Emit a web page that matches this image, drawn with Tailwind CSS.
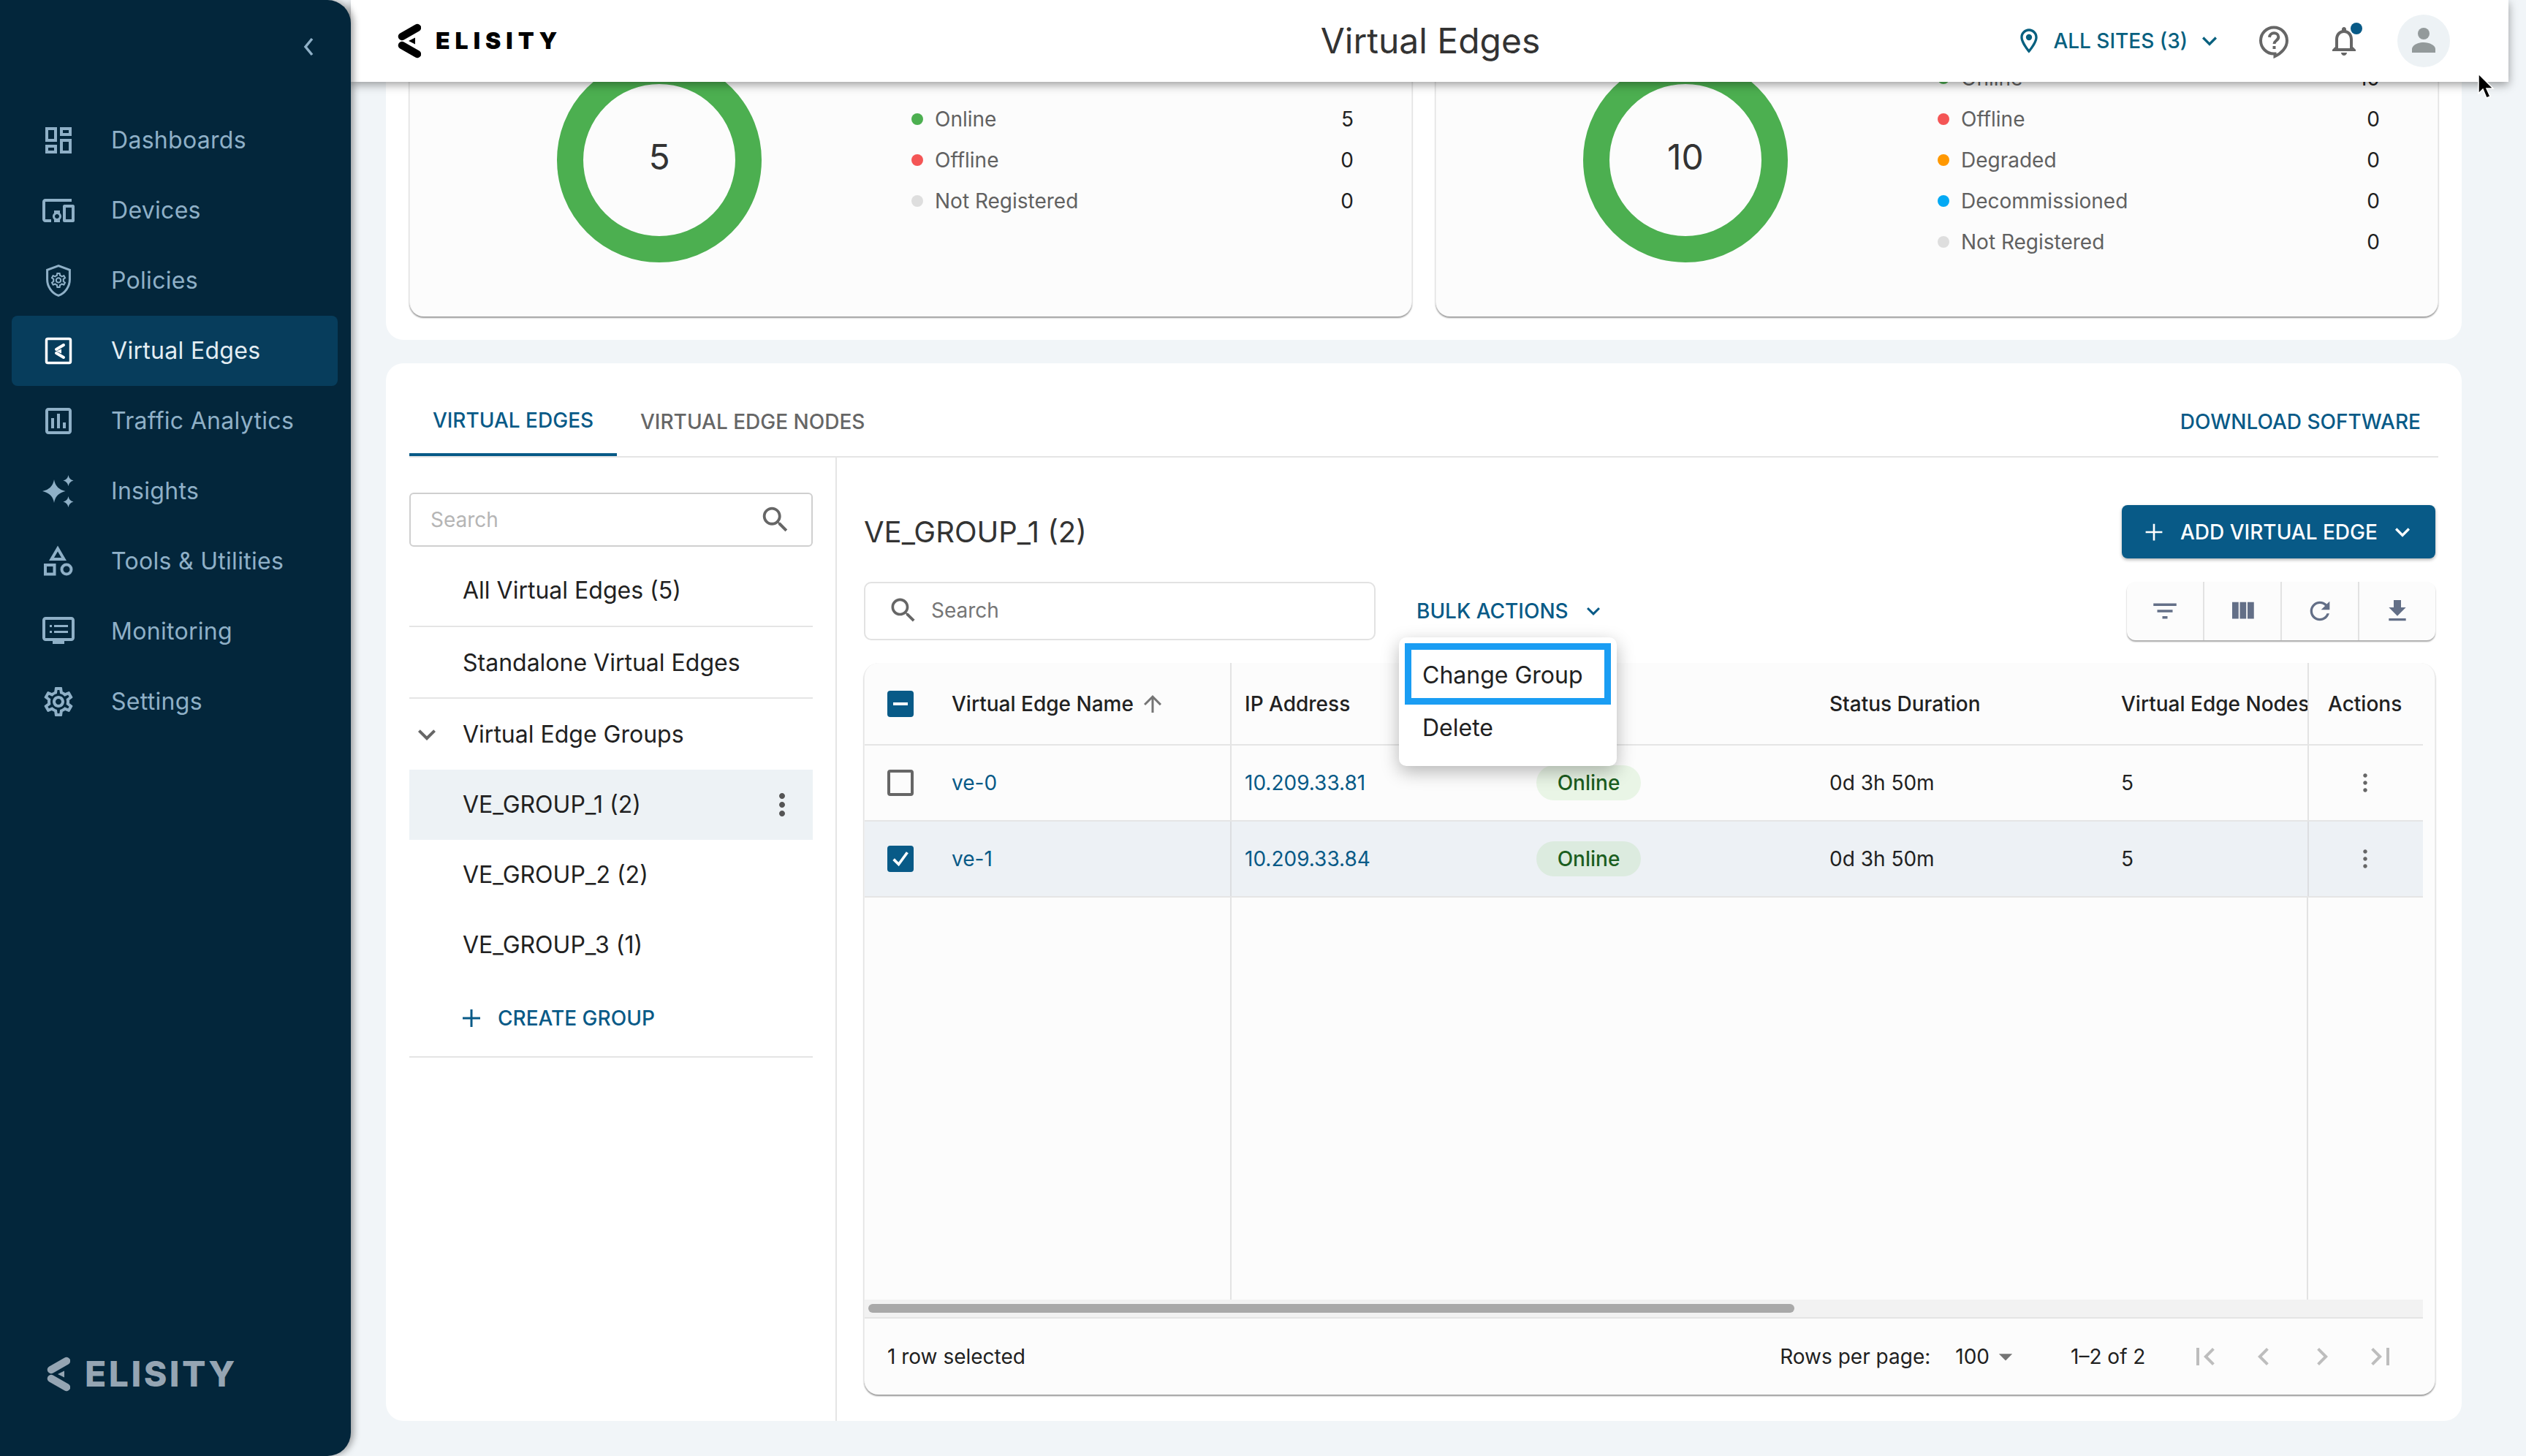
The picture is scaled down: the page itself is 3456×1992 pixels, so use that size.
<!DOCTYPE html>
<html lang="en">
<head>
<meta charset="utf-8">
<title>Virtual Edges</title>
<script src="https://cdn.jsdelivr.net/npm/@tailwindcss/browser@4"></script>
</head>
<body class="[font-family:Inter,sans-serif]">
<div class="relative flex h-[1992px] w-[3456px] overflow-hidden bg-[#f1f5f8] text-[#212121]">

  <!-- Sidebar -->
  <aside class="relative z-20 flex h-full w-[480px] shrink-0 flex-col rounded-r-[32px] bg-[#03263b] shadow-[4px_0_10px_rgba(0,0,0,0.35)]">
    <div class="flex h-[144px] justify-end pt-[40px] pr-[33px]">
      <svg class="h-[48px] w-[48px] text-[#8fb0c7]" viewBox="0 0 48 48" fill="none" stroke="currentColor" stroke-width="3.500" ><path d="M28 13 19 24l9 11"/></svg>
    </div>
    <nav class="flex flex-col pr-[18px] pl-[16px] text-[32px] tracking-[0.3px] text-[#8fb0c7]">
      <a class="flex h-[96px] items-center gap-[48px] pl-[40px]"><svg class="h-[48px] w-[48px] shrink-0" viewBox="0 0 24 24" fill="currentColor"><path d="M19 5v2h-4V5h4M9 5v6H5V5h4m10 8v6h-4v-6h4M9 17v2H5v-2h4M21 3h-8v6h8V3zM11 3H3v10h8V3zm10 8h-8v10h8V11zm-10 4H3v6h8v-6z"/></svg>Dashboards</a>
      <a class="flex h-[96px] items-center gap-[48px] pl-[40px]"><svg class="h-[48px] w-[48px] shrink-0" viewBox="0 0 24 24" fill="currentColor"><path d="M3 6h18V4H3c-1.1 0-2 .9-2 2v12c0 1.1.9 2 2 2h4v-2H3V6zm10 6H9v1.78c-.61.55-1 1.33-1 2.22s.39 1.67 1 2.22V20h4v-1.78c.61-.55 1-1.34 1-2.22s-.39-1.67-1-2.22V12zm-2 5.5c-.83 0-1.5-.67-1.5-1.5s.67-1.5 1.5-1.5 1.5.67 1.5 1.5-.67 1.5-1.5 1.5zM22 8h-6c-.5 0-1 .5-1 1v10c0 .5.5 1 1 1h6c.5 0 1-.5 1-1V9c0-.5-.5-1-1-1zm-1 10h-4v-8h4v8z"/></svg>Devices</a>
      <a class="flex h-[96px] items-center gap-[48px] pl-[40px]"><svg class="h-[48px] w-[48px] shrink-0" viewBox="0 0 24 24" fill="currentColor"><path fill="none" stroke="currentColor" stroke-width="1.5" d="M12 1.800 4.300 4.700v6.500c0 4.800 3.200 9.400 7.700 11 4.500-1.600 7.700-6.200 7.700-11V4.700z"/><g transform="translate(5.700 5.400) scale(.525)"><path d="M19.43 12.98c.04-.32.07-.64.07-.98 0-.34-.03-.66-.07-.98l2.11-1.65c.19-.15.24-.42.12-.64l-2-3.46c-.09-.16-.26-.25-.44-.25-.06 0-.12.01-.17.03l-2.49 1c-.52-.4-1.08-.73-1.69-.98l-.38-2.65C14.46 2.18 14.25 2 14 2h-4c-.25 0-.46.18-.49.42l-.38 2.65c-.61.25-1.17.59-1.69.98l-2.49-1c-.06-.02-.12-.03-.18-.03-.17 0-.34.09-.43.25l-2 3.46c-.13.22-.07.49.12.64l2.11 1.65c-.04.32-.07.65-.07.98 0 .33.03.66.07.98l-2.11 1.65c-.19.15-.24.42-.12.64l2 3.46c.09.16.26.25.44.25.06 0 .12-.01.17-.03l2.49-1c.52.4 1.08.73 1.69.98l.38 2.65c.03.24.24.42.49.42h4c.25 0 .46-.18.49-.42l.38-2.65c.61-.25 1.17-.59 1.69-.98l2.49 1c.06.02.12.03.18.03.17 0 .34-.09.43-.25l2-3.46c.12-.22.07-.49-.12-.64l-2.11-1.65zm-1.98-1.71c.04.31.05.52.05.73 0 .21-.02.43-.05.73l-.14 1.13.89.7 1.08.84-.7 1.21-1.27-.51-1.04-.42-.9.68c-.43.32-.84.56-1.25.73l-1.06.43-.16 1.13-.2 1.35h-1.4l-.19-1.35-.16-1.13-1.06-.43c-.43-.18-.83-.41-1.23-.71l-.91-.7-1.06.43-1.27.51-.7-1.21 1.08-.84.89-.7-.14-1.13c-.03-.31-.05-.54-.05-.74s.02-.43.05-.73l.14-1.13-.89-.7-1.08-.84.7-1.21 1.27.51 1.04.42.9-.68c.43-.32.84-.56 1.25-.73l1.06-.43.16-1.13.2-1.35h1.39l.19 1.35.16 1.13 1.06.43c.43.18.83.41 1.23.71l.91.7 1.06-.43 1.27-.51.7 1.21-1.07.85-.89.7.14 1.13zM12 8c-2.21 0-4 1.79-4 4s1.79 4 4 4 4-1.79 4-4-1.79-4-4-4zm0 6c-1.1 0-2-.9-2-2s.9-2 2-2 2 .9 2 2-.9 2-2 2z"/></g></svg>Policies</a>
      <a class="flex h-[96px] items-center gap-[48px] rounded-[8px] bg-[#073d5c] pl-[40px] text-[#e3edf3]"><svg class="h-[48px] w-[48px] shrink-0" viewBox="0 0 48 48" fill="none"><rect x="7.500" y="7.500" width="33" height="33" rx="2" stroke="#fff" stroke-width="3.500"/><path d="M31 16l-10 6M21 27l10 6" stroke="#fff" stroke-width="4" stroke-linecap="round"/><path d="M21 24.500l7-3v6z" fill="#fff"/></svg>Virtual Edges</a>
      <a class="flex h-[96px] items-center gap-[48px] pl-[40px]"><svg class="h-[48px] w-[48px] shrink-0" viewBox="0 0 24 24" fill="currentColor"><path d="M9 17H7v-7h2v7zm4 0h-2V7h2v10zm4 0h-2v-4h2v4zm2 2H5V5h14v14zm0-16H5c-1.1 0-2 .9-2 2v14c0 1.1.9 2 2 2h14c1.1 0 2-.9 2-2V5c0-1.1-.9-2-2-2z"/></svg>Traffic Analytics</a>
      <a class="flex h-[96px] items-center gap-[48px] pl-[40px]"><svg class="h-[48px] w-[48px] shrink-0" viewBox="0 0 48 48" fill="currentColor"><path d="M18 8q2 13 15.500 16Q20 27 18 40 16 27 2 24 16 21 18 8z"/><path d="M37.500 2q1 6 7 7.500-6 1.500-7 7.500-1-6-7-7.500 6-1.500 7-7.500zM37.500 31q1 6 7 7.500-6 1.500-7 7.500-1-6-7-7.500 6-1.500 7-7.500z"/></svg>Insights</a>
      <a class="flex h-[96px] items-center gap-[48px] pl-[40px]"><svg class="h-[48px] w-[48px] shrink-0" viewBox="0 0 48 48" fill="none" stroke="currentColor" stroke-width="4"><path d="M23 6.500 14.500 21h17z"/><rect x="6" y="29" width="12.500" height="12.500"/><circle cx="35" cy="35" r="6.500"/></svg>Tools &amp; Utilities</a>
      <a class="flex h-[96px] items-center gap-[48px] pl-[40px]"><svg class="h-[48px] w-[48px] shrink-0" viewBox="0 0 48 48" fill="none"><rect x="4" y="6" width="40" height="29" rx="2.500" stroke="currentColor" stroke-width="4"/><path d="M12 15h3v3h-3zM12 23h3v3h-3zM18 15h19v3H18zM18 23h19v3H18zM16 36h16v5H16z" fill="currentColor"/></svg>Monitoring</a>
      <a class="flex h-[96px] items-center gap-[48px] pl-[40px]"><svg class="h-[48px] w-[48px] shrink-0" viewBox="0 0 24 24" fill="currentColor"><path d="M19.43 12.98c.04-.32.07-.64.07-.98 0-.34-.03-.66-.07-.98l2.11-1.65c.19-.15.24-.42.12-.64l-2-3.46c-.09-.16-.26-.25-.44-.25-.06 0-.12.01-.17.03l-2.49 1c-.52-.4-1.08-.73-1.69-.98l-.38-2.65C14.46 2.18 14.25 2 14 2h-4c-.25 0-.46.18-.49.42l-.38 2.65c-.61.25-1.17.59-1.69.98l-2.49-1c-.06-.02-.12-.03-.18-.03-.17 0-.34.09-.43.25l-2 3.46c-.13.22-.07.49.12.64l2.11 1.65c-.04.32-.07.65-.07.98 0 .33.03.66.07.98l-2.11 1.65c-.19.15-.24.42-.12.64l2 3.46c.09.16.26.25.44.25.06 0 .12-.01.17-.03l2.49-1c.52.4 1.08.73 1.69.98l.38 2.65c.03.24.24.42.49.42h4c.25 0 .46-.18.49-.42l.38-2.65c.61-.25 1.17-.59 1.69-.98l2.49 1c.06.02.12.03.18.03.17 0 .34-.09.43-.25l2-3.46c.12-.22.07-.49-.12-.64l-2.11-1.65zm-1.98-1.71c.04.31.05.52.05.73 0 .21-.02.43-.05.73l-.14 1.13.89.7 1.08.84-.7 1.21-1.27-.51-1.04-.42-.9.68c-.43.32-.84.56-1.25.73l-1.06.43-.16 1.13-.2 1.35h-1.4l-.19-1.35-.16-1.13-1.06-.43c-.43-.18-.83-.41-1.23-.71l-.91-.7-1.06.43-1.27.51-.7-1.21 1.08-.84.89-.7-.14-1.13c-.03-.31-.05-.54-.05-.74s.02-.43.05-.73l.14-1.13-.89-.7-1.08-.84.7-1.21 1.27.51 1.04.42.9-.68c.43-.32.84-.56 1.25-.73l1.06-.43.16-1.13.2-1.35h1.39l.19 1.35.16 1.13 1.06.43c.43.18.83.41 1.23.71l.91.7 1.06-.43 1.27-.51.7 1.21-1.07.85-.89.7.14 1.13zM12 8c-2.21 0-4 1.79-4 4s1.79 4 4 4 4-1.79 4-4-1.79-4-4-4zm0 6c-1.1 0-2-.9-2-2s.9-2 2-2 2 .9 2 2-.9 2-2 2z"/></svg>Settings</a>
    </nav>
    <div class="mt-auto flex items-center gap-[20px] pb-[88px] pl-[64px] text-[#95a5b3]">
      <svg class="h-[48px] w-[32px] shrink-0" viewBox="0 0 32 48" fill="currentColor"><path d="M27 6 6 18M6 30l21 12" stroke="currentColor" stroke-width="10.500" stroke-linecap="round" stroke-linejoin="round" fill="none"/><path d="M15 24l9-4.500v9z"/></svg>
      <span class="text-[48px] leading-none font-extrabold tracking-[3.500px]">ELISITY</span>
    </div>
  </aside>

  <!-- Main -->
  <main class="relative h-full flex-1">
    <header class="absolute top-0 left-0 z-10 flex h-[112px] w-[2952px] items-center bg-white shadow-[0_4px_12px_rgba(0,0,0,0.38)]">
      <div class="flex flex-1 items-center gap-[20px] pl-[64px] text-black">
        <svg class="h-[48px] w-[32px] shrink-0" viewBox="0 0 32 48" fill="currentColor"><path d="M27 6 6 18M6 30l21 12" stroke="currentColor" stroke-width="10.500" stroke-linecap="round" stroke-linejoin="round" fill="none"/><path d="M15 24l9-4.500v9z"/></svg>
        <span class="text-[32px] leading-none font-black tracking-[7px]">ELISITY</span>
      </div>
      <h1 class="ml-[18px] text-[48px] leading-none font-normal text-[#333]">Virtual Edges</h1>
      <div class="flex flex-1 items-center justify-end pr-[80px]">
        <svg class="mr-[13px] h-[40px] w-[40px] text-[#07607f]" viewBox="0 0 24 24" fill="currentColor"><path d="M12 2C8.130 2 5 5.130 5 9c0 5.250 7 13 7 13s7-7.750 7-13c0-3.870-3.130-7-7-7zM7 9c0-2.760 2.240-5 5-5s5 2.240 5 5c0 2.880-2.880 7.190-5 9.880C9.920 16.210 7 11.850 7 9z"/><circle cx="12" cy="9" r="2.500"/></svg>
        <span class="text-[28px] font-medium text-[#07607f]">ALL SITES (3)</span>
        <svg class="ml-[10px] h-[40px] w-[40px] text-[#07607f]" viewBox="0 0 24 24" fill="currentColor"><path d="M16.590 8.590 12 13.170 7.410 8.590 6 10l6 6 6-6z"/></svg>
        <svg class="ml-[44px] h-[48px] w-[48px] text-[#666]" viewBox="0 0 48 48" fill="none"><path d="M24 5.500a18 18 0 1 0 0 36h1.500v3.500C34 41 42 33.500 42 23.500 42 13.500 34 5.500 24 5.500z" stroke="currentColor" stroke-width="4"/><path d="M18 19c.500-7.500 12-7.500 12.300-.5.200 4.800-5.800 5.200-5.800 9.500" stroke="currentColor" stroke-width="4"/><rect x="22.500" y="31" width="4" height="4" fill="currentColor"/></svg>
        <div class="relative ml-[48px] h-[48px] w-[48px]">
          <svg class="h-[48px] w-[48px] text-[#666]" viewBox="0 0 24 24" fill="currentColor"><path d="M12 22c1.100 0 2-.9 2-2h-4c0 1.100.9 2 2 2zm6-6v-5c0-3.070-1.630-5.640-4.500-6.320V4c0-.830-.670-1.500-1.500-1.500s-1.500.670-1.500 1.500v.680C7.640 5.360 6 7.920 6 11v5l-2 2v1h16v-1l-2-2zm-2 1H8v-6c0-2.480 1.510-4.500 4-4.500s4 2.020 4 4.500v6z"/></svg>
          <span class="absolute top-[-1px] right-[-1px] h-[16px] w-[16px] rounded-full bg-[#085a87]"></span>
        </div>
        <div class="ml-[49px] flex h-[72px] w-[72px] items-center justify-center rounded-full bg-[#edf2f5]">
          <svg class="h-[48px] w-[48px] text-[#939a9b]" viewBox="0 0 48 48" fill="currentColor"><circle cx="24" cy="14" r="8"/><path d="M8 40v-5c0-5 8-9 16-9s16 4 16 9v5z"/></svg>
        </div>
      </div>
    </header>

    <div class="flex w-[2976px] flex-col pr-[88px] pl-[48px]">
      <!-- Summary panel -->
      <section class="flex h-[465px] gap-[32px] rounded-b-[24px] bg-white px-[32px] pb-[32px]">
        <div class="flex flex-1 rounded-b-[20px] border-x border-[#eeeeee] bg-[#fcfcfc] shadow-[0_2px_2px_rgba(0,0,0,0.4)]">
          <div class="mt-[79px] ml-[201px] flex h-[280px] w-[280px] shrink-0 items-center justify-center rounded-full border-[36px] border-[#4caf50] pb-[8px] text-[48px] leading-none text-[#333]">5</div>
          <div class="mt-[135px] ml-[205px] flex w-[605px] flex-col text-[28px] text-[#616161]">
            <div class="flex h-[56px] items-center"><span class="mr-[16px] h-[16px] w-[16px] rounded-full bg-[#4caf50]"></span>Online<span class="ml-auto text-[#212121]">5</span></div>
            <div class="flex h-[56px] items-center"><span class="mr-[16px] h-[16px] w-[16px] rounded-full bg-[#f45555]"></span>Offline<span class="ml-auto text-[#212121]">0</span></div>
            <div class="flex h-[56px] items-center"><span class="mr-[16px] h-[16px] w-[16px] rounded-full bg-[#dedede]"></span>Not Registered<span class="ml-auto text-[#212121]">0</span></div>
          </div>
        </div>
        <div class="flex flex-1 rounded-b-[20px] border-x border-[#eeeeee] bg-[#fcfcfc] shadow-[0_2px_2px_rgba(0,0,0,0.4)]">
          <div class="mt-[79px] ml-[201px] flex h-[280px] w-[280px] shrink-0 items-center justify-center rounded-full border-[36px] border-[#4caf50] pb-[8px] text-[48px] leading-none text-[#333]">10</div>
          <div class="mt-[79px] ml-[205px] flex w-[605px] flex-col text-[28px] text-[#616161]">
            <div class="flex h-[56px] items-center"><span class="mr-[16px] h-[16px] w-[16px] rounded-full bg-[#4caf50]"></span>Online<span class="ml-auto text-[#212121]">10</span></div>
            <div class="flex h-[56px] items-center"><span class="mr-[16px] h-[16px] w-[16px] rounded-full bg-[#f45555]"></span>Offline<span class="ml-auto text-[#212121]">0</span></div>
            <div class="flex h-[56px] items-center"><span class="mr-[16px] h-[16px] w-[16px] rounded-full bg-[#ff9800]"></span>Degraded<span class="ml-auto text-[#212121]">0</span></div>
            <div class="flex h-[56px] items-center"><span class="mr-[16px] h-[16px] w-[16px] rounded-full bg-[#03a9f4]"></span>Decommissioned<span class="ml-auto text-[#212121]">0</span></div>
            <div class="flex h-[56px] items-center"><span class="mr-[16px] h-[16px] w-[16px] rounded-full bg-[#dedede]"></span>Not Registered<span class="ml-auto text-[#212121]">0</span></div>
          </div>
        </div>
      </section>

      <!-- Detail panel -->
      <section class="mt-[32px] flex h-[1447px] flex-col rounded-[24px] bg-white px-[32px]">
        <div class="flex h-[129px] shrink-0 items-end border-b-2 border-[#e5e5e5] pr-[24px] text-[28px] font-medium">
          <div class="flex h-[98px] w-[284px] items-center justify-center border-b-4 border-[#085a87] pt-[4px] text-[#085a87]">VIRTUAL EDGES</div>
          <div class="flex h-[98px] items-center px-[32px] pt-[4px] text-[#666]">VIRTUAL EDGE NODES</div>
          <div class="ml-auto flex h-[98px] items-center pt-[4px] text-[#085a87]">DOWNLOAD SOFTWARE</div>
        </div>

        <div class="flex flex-1">
          <!-- Groups column -->
          <div class="w-[585px] shrink-0 border-r-2 border-[#e5e5e5] pt-[48px]">
            <div class="w-[552px] text-[32px]">
              <div class="flex h-[74px] items-center justify-between rounded-[6px] border-2 border-[#cfcfcf] pr-[26px] pl-[27px] text-[28px] text-[#b5b5b5]">Search
                <svg class="h-[46px] w-[46px] text-[#666]" viewBox="0 0 24 24" fill="currentColor"><path d="M15.500 14h-.790l-.280-.270C15.410 12.590 16 11.110 16 9.500 16 5.910 13.090 3 9.500 3S3 5.910 3 9.500 5.910 16 9.500 16c1.610 0 3.090-.590 4.230-1.570l.270.280v.790l5 4.990L20.490 19l-4.990-5zm-6 0C7.010 14 5 11.990 5 9.500S7.010 5 9.500 5 14 7.010 14 9.500 11.990 14 9.500 14z"/></svg>
              </div>
              <div class="mt-[10px] flex h-[100px] items-center border-b-2 border-[#e5e5e5] pt-[2px] pl-[73px]">All Virtual Edges (5)</div>
              <div class="flex h-[98px] items-center border-b-2 border-[#e5e5e5] pt-[1px] pl-[73px]">Standalone Virtual Edges</div>
              <div class="flex h-[97px] items-center">
                <svg class="h-[48px] w-[48px] text-[#666]" viewBox="0 0 24 24" fill="currentColor"><path d="M16.590 8.590 12 13.170 7.410 8.590 6 10l6 6 6-6z"/></svg>
                <span class="ml-[25px]">Virtual Edge Groups</span>
              </div>
              <div class="flex h-[96px] items-center justify-between bg-[#edf2f5] pr-[18px] pl-[73px]">VE_GROUP_1 (2)
                <svg class="h-[48px] w-[48px] text-[#555]" viewBox="0 0 24 24" fill="currentColor"><path d="M12 8c1.100 0 2-.9 2-2s-.9-2-2-2-2 .9-2 2 .9 2 2 2zm0 2c-1.100 0-2 .9-2 2s.9 2 2 2 2-.9 2-2-.9-2-2-2zm0 6c-1.100 0-2 .9-2 2s.9 2 2 2 2-.9 2-2-.9-2-2-2z"/></svg>
              </div>
              <div class="flex h-[96px] items-center pl-[73px]">VE_GROUP_2 (2)</div>
              <div class="flex h-[96px] items-center pl-[73px]">VE_GROUP_3 (1)</div>
              <div class="flex h-[106px] items-center border-b-2 border-[#e5e5e5] pl-[69px] text-[28px] font-medium text-[#085a87]">
                <svg class="mr-[20px] h-[32px] w-[32px]" viewBox="0 0 32 32" fill="currentColor"><path d="M14.500 4h3v10.500H28v3H17.500V28h-3V17.500H4v-3h10.500z"/></svg>CREATE GROUP
              </div>
            </div>
          </div>

          <!-- Table column -->
          <div class="relative w-[2191px] pt-[65px] pr-[4px] pl-[37px]">
            <div class="flex h-[73px] items-center justify-between">
              <h2 class="text-[40px] leading-none font-normal text-[#333]">VE_GROUP_1 (2)</h2>
              <button class="flex h-[73px] w-[429px] items-center rounded-[8px] bg-[#085a87] pl-[30px] text-[28px] font-medium text-white shadow-[0_2px_4px_rgba(0,0,0,0.3)]">
                <svg class="mr-[22px] h-[28px] w-[28px]" viewBox="0 0 32 32" fill="currentColor"><path d="M14.500 3h3v11.500H29v3H17.500V29h-3V17.500H3v-3h11.500z"/></svg>ADD VIRTUAL EDGE
                <svg class="ml-[14px] h-[40px] w-[40px]" viewBox="0 0 24 24" fill="currentColor"><path d="M16.590 8.590 12 13.170 7.410 8.590 6 10l6 6 6-6z"/></svg>
              </button>
            </div>

            <div class="mt-[32px] flex h-[80px] items-center justify-between">
              <div class="flex items-center">
                <div class="flex h-[80px] w-[700px] items-center rounded-[10px] border-2 border-[#e2e2e2] pb-[2px] pl-[30px] text-[28px] text-[#767676]">
                  <svg class="mr-[16px] h-[44px] w-[44px] text-[#666]" viewBox="0 0 24 24" fill="currentColor"><path d="M15.500 14h-.790l-.280-.270C15.410 12.590 16 11.110 16 9.500 16 5.910 13.090 3 9.500 3S3 5.910 3 9.500 5.910 16 9.500 16c1.610 0 3.090-.590 4.230-1.570l.270.280v.790l5 4.990L20.490 19l-4.990-5zm-6 0C7.010 14 5 11.990 5 9.500S7.010 5 9.500 5 14 7.010 14 9.500 11.990 14 9.500 14z"/></svg>Search
                </div>
                <div class="ml-[56px] flex items-center text-[28px] font-medium text-[#085a87]">BULK ACTIONS
                  <svg class="ml-[16px] h-[36px] w-[36px]" viewBox="0 0 24 24" fill="currentColor"><path d="M16.590 8.590 12 13.170 7.410 8.590 6 10l6 6 6-6z"/></svg>
                </div>
              </div>
              <div class="flex h-[80px] w-[422px] rounded-[12px] bg-[#fcfcfc] text-[#636f87] shadow-[0_2px_2px_rgba(0,0,0,0.35)]">
                <div class="flex flex-1 items-center justify-center border-r-2 border-[#e2e2e2]"><svg class="h-[42px] w-[42px]" viewBox="0 0 24 24" fill="currentColor"><path d="M10 18h4v-2h-4v2zM3 6v2h18V6H3zm3 7h12v-2H6v2z"/></svg></div>
                <div class="flex flex-1 items-center justify-center border-r-2 border-[#e2e2e2]"><svg class="h-[42px] w-[42px]" viewBox="0 0 24 24" fill="currentColor"><path d="M10 18h5V5h-5v13zm-6 0h5V5H4v13zM16 5v13h5V5h-5z"/></svg></div>
                <div class="flex flex-1 items-center justify-center border-r-2 border-[#e2e2e2]"><svg class="h-[40px] w-[40px]" viewBox="0 0 24 24" fill="currentColor"><path d="M17.650 6.350C16.200 4.900 14.210 4 12 4c-4.420 0-7.990 3.580-7.990 8s3.570 8 7.990 8c3.730 0 6.840-2.550 7.730-6h-2.080c-.820 2.330-3.040 4-5.650 4-3.310 0-6-2.690-6-6s2.690-6 6-6c1.660 0 3.140.690 4.220 1.780L13 11h7V4l-2.350 2.350z"/></svg></div>
                <div class="flex flex-1 items-center justify-center"><svg class="h-[40px] w-[40px]" viewBox="0 0 24 24" fill="currentColor"><path d="M19 9h-4V3H9v6H5l7 7 7-7zM5 18v2h14v-2H5z"/></svg></div>
              </div>
            </div>

            <!-- Table -->
            <div class="mt-[31px] flex h-[1001px] flex-col rounded-[20px] border-x border-[#eeeeee] bg-[#fcfcfc] pr-[16px] text-[28px] shadow-[0_2px_2px_rgba(0,0,0,0.4)]">
              <div class="grid h-[113px] shrink-0 grid-cols-[502px_401px_399px_401px_271px_160px] items-stretch border-b-2 border-[#e5e5e5] font-medium">
                <div class="flex items-center border-r-2 border-[#e3e3e3] pl-[31px]">
                  <span class="mr-[52px] flex h-[36px] w-[36px] items-center justify-center rounded-[4px] bg-[#085a87]"><span class="h-[4px] w-[20px] bg-white"></span></span>Virtual Edge Name
                  <svg class="ml-[8px] h-[36px] w-[36px] text-[#757575]" viewBox="0 0 24 24" fill="currentColor"><path d="M4 12l1.410 1.410L11 7.830V20h2V7.830l5.580 5.590L20 12l-8-8-8 8z" /></svg>
                </div>
                <div class="flex items-center pl-[18px]">IP Address</div>
                <div></div>
                <div class="flex items-center pl-[18px]">Status Duration</div>
                <div class="flex items-center overflow-hidden pl-[16px] whitespace-nowrap">Virtual Edge Nodes</div>
                <div class="flex items-center border-l-2 border-[#e3e3e3] pl-[26px]">Actions</div>
              </div>
              <div class="grid h-[104px] shrink-0 grid-cols-[502px_401px_399px_401px_271px_160px] items-stretch border-b-2 border-[#e5e5e5]">
                <div class="flex items-center border-r-2 border-[#e3e3e3] pl-[31px] text-[#085a87]">
                  <span class="mr-[52px] h-[36px] w-[36px] rounded-[4px] border-[4px] border-[#666]"></span>ve-0
                </div>
                <div class="flex items-center pl-[18px] text-[#085a87]">10.209.33.81</div>
                <div class="flex items-center pl-[16px]"><span class="flex h-[48px] w-[143px] items-center justify-center rounded-full bg-[#e9f5e6] font-medium text-[#1b5e20]">Online</span></div>
                <div class="flex items-center pl-[18px]">0d 3h 50m</div>
                <div class="flex items-center pl-[16px]">5</div>
                <div class="flex items-center justify-center border-l-2 border-[#e3e3e3] pr-[4px] text-[#666]"><svg class="h-[44px] w-[44px]" viewBox="0 0 24 24" fill="currentColor"><path d="M12 8c.8 0 1.500-.7 1.500-1.500S12.800 5 12 5s-1.500.7-1.500 1.500S11.200 8 12 8zm0 2.500c-.8 0-1.500.7-1.500 1.500s.7 1.500 1.500 1.500 1.500-.7 1.500-1.500-.7-1.500-1.500-1.500zm0 5.500c-.8 0-1.500.7-1.500 1.500S11.200 19 12 19s1.500-.7 1.500-1.500S12.800 16 12 16z"/></svg></div>
              </div>
              <div class="grid h-[104px] shrink-0 grid-cols-[502px_401px_399px_401px_271px_160px] items-stretch border-b-2 border-[#e5e5e5] bg-[#edf1f5]">
                <div class="flex items-center border-r-2 border-[#dcdee1] pl-[31px] text-[#085a87]">
                  <span class="mr-[52px] flex h-[36px] w-[36px] items-center justify-center rounded-[4px] bg-[#085a87]"><svg class="h-[30px] w-[30px] text-white" viewBox="0 0 24 24" fill="none" stroke="currentColor" stroke-width="3"><path d="M4.500 12.500 10 18l9.500-13"/></svg></span>ve-1
                </div>
                <div class="flex items-center pl-[18px] text-[#085a87]">10.209.33.84</div>
                <div class="flex items-center pl-[16px]"><span class="flex h-[48px] w-[143px] items-center justify-center rounded-full bg-[#dcebdf] font-medium text-[#1b5e20]">Online</span></div>
                <div class="flex items-center pl-[18px]">0d 3h 50m</div>
                <div class="flex items-center pl-[16px]">5</div>
                <div class="flex items-center justify-center border-l-2 border-[#dcdee1] pr-[4px] text-[#666]"><svg class="h-[44px] w-[44px]" viewBox="0 0 24 24" fill="currentColor"><path d="M12 8c.8 0 1.500-.7 1.500-1.500S12.800 5 12 5s-1.500.7-1.500 1.500S11.200 8 12 8zm0 2.500c-.8 0-1.500.7-1.500 1.500s.7 1.500 1.500 1.500 1.500-.7 1.500-1.500-.7-1.500-1.500-1.500zm0 5.500c-.8 0-1.500.7-1.500 1.500S11.200 19 12 19s1.500-.7 1.500-1.500S12.800 16 12 16z"/></svg></div>
              </div>
              <div class="grid flex-1 grid-cols-[502px_1471px_160px]">
                <div class="border-r-2 border-[#e3e3e3]"></div>
                <div></div>
                <div class="border-l-2 border-[#e3e3e3]"></div>
              </div>
              <div class="h-[26px] shrink-0 border-b-2 border-[#e5e5e5] bg-[#f2f2f2] px-[5px] pt-[6px]">
                <div class="h-[12px] w-[1267px] rounded-full bg-[#a9a9a9]"></div>
              </div>
              <div class="flex h-[104px] shrink-0 items-center pr-[34px] pl-[31px]">
                <span>1 row selected</span>
                <span class="ml-auto">Rows per page:</span>
                <span class="ml-[34px]">100</span>
                <svg class="h-[44px] w-[44px] text-[#757575]" viewBox="0 0 24 24" fill="currentColor"><path d="M7 10l5 5 5-5z"/></svg>
                <span class="ml-[67px] w-[160px]">1–2 of 2</span>
                <svg class="h-[48px] w-[48px] text-[#bdbdbd]" viewBox="0 0 24 24" fill="currentColor"><path d="M18.410 16.590 13.820 12l4.590-4.590L17 6l-6 6 6 6zM6 6h2v12H6z"/></svg>
                <svg class="ml-[32px] h-[48px] w-[48px] text-[#bdbdbd]" viewBox="0 0 24 24" fill="currentColor"><path d="M15.410 7.410 14 6l-6 6 6 6 1.410-1.410L10.830 12z"/></svg>
                <svg class="ml-[32px] h-[48px] w-[48px] text-[#bdbdbd]" viewBox="0 0 24 24" fill="currentColor"><path d="M10 6 8.590 7.410 13.170 12l-4.580 4.590L10 18l6-6z"/></svg>
                <svg class="ml-[32px] h-[48px] w-[48px] text-[#bdbdbd]" viewBox="0 0 24 24" fill="currentColor"><path d="M5.590 7.410 10.180 12l-4.590 4.590L7 18l6-6-6-6zM16 6h2v12h-2z"/></svg>
              </div>
            </div>

            <!-- Bulk actions menu -->
            <div class="absolute top-[246px] left-[769px] z-[5] h-[176px] w-[298px] rounded-[10px] bg-white p-[8px] text-[32px] shadow-[0_8px_24px_rgba(0,0,0,0.28)]">
              <div class="flex h-[84px] items-center border-[9px] border-[#1a9df3] pt-[3px] pl-[15px]">Change Group</div>
              <div class="mt-[8px] flex h-[48px] items-center pl-[24px]">Delete</div>
            </div>
          </div>
        </div>
      </section>
    </div>
  </main>

  <!-- Pointer -->
  <svg class="absolute top-[100px] left-[3388px] z-30 h-[36px] w-[26px]" viewBox="0 0 26 36"><path d="M3 1v27l6-6 5 12 5-2-5-11h9z" fill="#000" stroke="#fff" stroke-width="1.500"/></svg>
</div>
</body>
</html>
